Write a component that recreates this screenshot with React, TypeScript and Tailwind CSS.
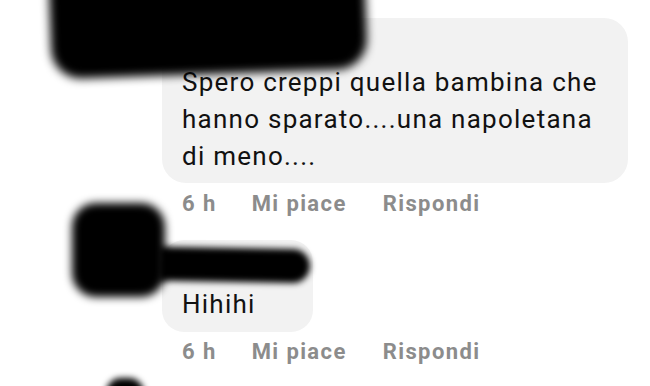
import React from "react";

const Meta = () => (
  <div className="flex items-center gap-[35px] h-[28px] leading-[28px] text-[22px] font-bold tracking-[1.4px] text-[#8c8c8c]">
    <span>6 h</span>
    <span>Mi piace</span>
    <span className="ml-[1px]">Rispondi</span>
  </div>
);

const App = () => {
  return (
    <div
      className="relative w-[650px] h-[386px] overflow-hidden bg-white text-[#111111]"
      style={{ fontFamily: "Roboto, 'Noto Sans', sans-serif" }}
    >
      <div className="flex flex-col pt-[18px] pl-[162px]">
        {/* First comment */}
        <div className="relative">
          <div className="w-[466px] rounded-[24px] bg-[#f2f2f2] px-5 pt-[46px] pb-[8px] text-[26px] leading-[37px] tracking-[1.25px]">
            Spero creppi quella bambina che hanno sparato....una napoletana di meno....
          </div>
          {/* redacted name */}
          <div className="absolute -left-[112px] -top-[58px] w-[316px] h-[114px] rounded-[30px] bg-black blur-[5px] -rotate-[2deg]" />
        </div>
        <div className="mt-[7px] pl-5">
          <Meta />
        </div>

        {/* Second comment */}
        <div className="relative mt-[22px]">
          {/* redacted avatar */}
          <div className="absolute -left-[90px] -top-[37px] w-[93px] h-[94px] rounded-[24px] bg-black blur-[4px]" />
          <div className="w-[151px] rounded-[22px] bg-[#f2f2f2] px-5 pt-[46px] pb-[9px] text-[26px] leading-[37px] tracking-[1.25px]">
            Hihihi
          </div>
          {/* redacted name */}
          <div className="absolute -left-[4px] top-[8px] w-[152px] h-[34px] rounded-l-[6px] rounded-r-full bg-black blur-[3px] rotate-[1deg]" />
        </div>
        <div className="mt-[6px] pl-5">
          <Meta />
        </div>

        {/* Next avatar, cut off */}
        <div className="relative mt-[12px]">
          <div className="absolute -left-[56px] top-0 w-[38px] h-[30px] rounded-full bg-black blur-[3px]" />
        </div>
      </div>
    </div>
  );
};

export default App;
